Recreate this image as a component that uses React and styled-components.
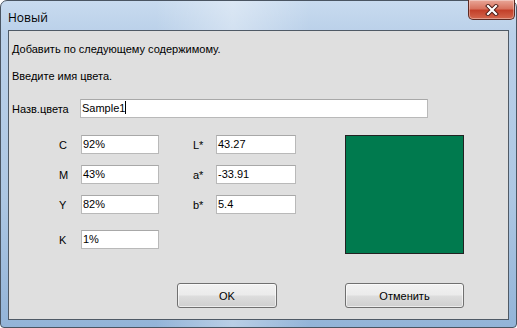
import React from 'react';
import styled, { createGlobalStyle } from 'styled-components';

const GlobalStyle = createGlobalStyle`
    html, body {
        margin: 0;
        padding: 0;
        background: #ffffff;
    }
    body {
        font-family: "Liberation Sans", Arial, sans-serif;
        font-size: 11px;
        color: #000;
    }
`

const Window = styled.div`
    box-sizing: border-box;
    width: 517px;
    height: 328px;
    display: flex;
    flex-direction: column;
    padding: 0 7px 7px 7px;
    border: 1px solid #4a5562;
    border-radius: 7px 7px 4px 4px;
    background:
        linear-gradient(90deg, rgba(255,255,255,0) 30%, rgba(255,255,255,0.35) 45%, rgba(255,255,255,0) 60%),
        linear-gradient(180deg, #c8dbef 0%, #bad0e9 10%, #adc7e3 60%, #93b4d8 100%);
`

const TitleBar = styled.div`
    height: 29px;
    display: flex;
    justify-content: space-between;
    align-items: flex-start;
`

const Title = styled.span`
    margin-top: 8px;
    font-family: "Open Sans", "Liberation Sans", sans-serif;
    font-size: 12px;
    color: #000;
`

const CloseButton = styled.div`
    box-sizing: border-box;
    width: 47px;
    height: 20px;
    margin-top: -1px;
    margin-right: -6px;
    display: flex;
    align-items: center;
    justify-content: center;
    border: 1px solid #5e2a22;
    border-top: none;
    border-radius: 0 0 5px 5px;
    background: linear-gradient(180deg, #e9a798 0%, #d8735f 45%, #c3402a 55%, #d4674d 100%);
    box-shadow: inset 0 0 0 1px rgba(255,255,255,0.35);
`

const Content = styled.div`
    box-sizing: border-box;
    flex: 1;
    display: flex;
    flex-direction: column;
    padding: 11px 3px 0 3px;
    border: 1px solid #4f5a66;
    background: #dfdfdf;
`

const Line = styled.div`
    height: 14px;
    line-height: 14px;
    margin-bottom: ${p => p.$gap || 0}px;
`

const NameRow = styled.div`
    display: flex;
    align-items: center;
    height: 19px;
    margin-bottom: 17px;
`

const NameLabel = styled.span`
    width: 68px;
`

const TextBox = styled.div`
    box-sizing: border-box;
    width: ${p => p.$w}px;
    height: 19px;
    padding: 0 1px;
    line-height: 17px;
    background: #fff;
    border: 1px solid #b9b9b9;
    border-top-color: #a8a8a8;
    white-space: nowrap;
`

const Caret = styled.span`
    display: inline-block;
    width: 1px;
    height: 13px;
    vertical-align: -2px;
    background: #000;
`

const FieldsArea = styled.div`
    display: flex;
    align-items: flex-start;
    padding-left: 47px;
`

const Column = styled.div`
    display: flex;
    flex-direction: column;
    gap: 11px;
    margin-right: ${p => p.$gap}px;
`

const Field = styled.div`
    display: flex;
    align-items: center;
    height: 19px;
    margin-top: ${p => (p.$spaced ? 5 : 0)}px;
`

const FieldLabel = styled.span`
    width: ${p => p.$w}px;
`

const Swatch = styled.div`
    box-sizing: border-box;
    width: 119px;
    height: 119px;
    background: #007a4e;
    border: 1px solid #222;
`

const ButtonRow = styled.div`
    display: flex;
    gap: 68px;
    margin-top: 29px;
    padding-left: 165px;
`

const Button = styled.div`
    box-sizing: border-box;
    width: ${p => p.$w}px;
    height: 25px;
    display: flex;
    align-items: center;
    justify-content: center;
    border: 1px solid #707070;
    border-radius: 3px;
    background: linear-gradient(180deg, #f2f2f2 0%, #ebebeb 48%, #dddddd 52%, #cfcfcf 100%);
    box-shadow: inset 0 0 0 1px rgba(255,255,255,0.6);
`

function CloseIcon(){
    return (
        <svg width="14" height="12" viewBox="0 0 14 12">
            <path d="M3 2 L11 10 M11 2 L3 10" stroke="#4a1a14" strokeWidth="4" strokeLinecap="square" />
            <path d="M3 2 L11 10 M11 2 L3 10" stroke="#ffffff" strokeWidth="2.2" strokeLinecap="square" />
        </svg>
    )
}

const cmyk = [
    { label: 'C', value: '92%' },
    { label: 'M', value: '43%' },
    { label: 'Y', value: '82%' },
    { label: 'K', value: '1%', spaced: true },
]

const lab = [
    { label: 'L*', value: '43.27' },
    { label: 'a*', value: '-33.91' },
    { label: 'b*', value: '5.4' },
]

function App(){
    return (
        <>
            <GlobalStyle />
            <Window>
                <TitleBar>
                    <Title>Новый</Title>
                    <CloseButton><CloseIcon /></CloseButton>
                </TitleBar>
                <Content>
                    <Line $gap={13}>Добавить по следующему содержимому.</Line>
                    <Line $gap={16}>Введите имя цвета.</Line>
                    <NameRow>
                        <NameLabel>Назв.цвета</NameLabel>
                        <TextBox $w={348}>Sample1<Caret /></TextBox>
                    </NameRow>
                    <FieldsArea>
                        <Column $gap={34}>
                            {cmyk.map(f => (
                                <Field key={f.label} $spaced={f.spaced}>
                                    <FieldLabel $w={22}>{f.label}</FieldLabel>
                                    <TextBox $w={78}>{f.value}</TextBox>
                                </Field>
                            ))}
                        </Column>
                        <Column $gap={49}>
                            {lab.map(f => (
                                <Field key={f.label}>
                                    <FieldLabel $w={23}>{f.label}</FieldLabel>
                                    <TextBox $w={80}>{f.value}</TextBox>
                                </Field>
                            ))}
                        </Column>
                        <Swatch />
                    </FieldsArea>
                    <ButtonRow>
                        <Button $w={100}>OK</Button>
                        <Button $w={119}>Отменить</Button>
                    </ButtonRow>
                </Content>
            </Window>
        </>
    )
}

export default App;
